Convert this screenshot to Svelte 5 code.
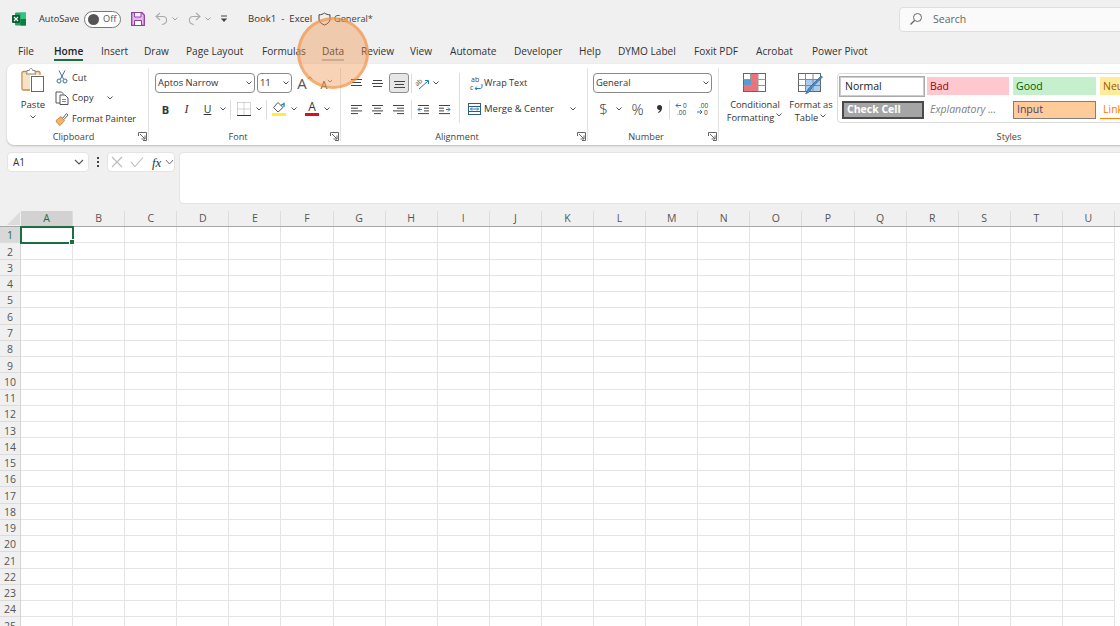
<script lang="ts">
  // width of each tab slot, from the start of one label to the start of the next
  const tabs = [
    { label: "File", w: 36 },
    { label: "Home", w: 47 },
    { label: "Insert", w: 43 },
    { label: "Draw", w: 42 },
    { label: "Page Layout", w: 76 },
    { label: "Formulas", w: 60 },
    { label: "Data", w: 39 },
    { label: "Review", w: 49 },
    { label: "View", w: 40 },
    { label: "Automate", w: 64 },
    { label: "Developer", w: 65 },
    { label: "Help", w: 39 },
    { label: "DYMO Label", w: 76 },
    { label: "Foxit PDF", w: 62 },
    { label: "Acrobat", w: 56 },
    { label: "Power Pivot", w: 100 }
  ];
  const columns = "ABCDEFGHIJKLMNOPQRSTU".split("");
  const rows = Array.from({ length: 25 }, (_, i) => i + 1);
</script>

{#snippet chev(cls = "")}
  <svg class="chev {cls}" width="8" height="6" viewBox="0 0 8 6"><path d="M1.500 1.500 4 4 6.500 1.500" fill="none" stroke="#555" stroke-width="1" /></svg>
{/snippet}

{#snippet launcher()}
  <svg class="launcher" width="9" height="9" viewBox="0 0 9 9"><path d="M.5 4V.5H8.500V8.500H5M2 2 7 7M7 3.500V7H3.500" fill="none" stroke="#666" /></svg>
{/snippet}

{#snippet lines(kind: string)}
  <svg width="13" height="11" viewBox="0 0 13 11">
    {#if kind === "left"}
      <path d="M1 1.500H12M1 4.200H8M1 6.900H12M1 9.600H8" stroke="#444" fill="none" />
    {:else if kind === "center"}
      <path d="M1 1.500H12M3 4.200H10M1 6.900H12M3 9.600H10" stroke="#444" fill="none" />
    {:else if kind === "right"}
      <path d="M1 1.500H12M5 4.200H12M1 6.900H12M5 9.600H12" stroke="#444" fill="none" />
    {:else if kind === "top"}
      <path d="M1 1.500H12M2 4.500H11M1 7.500H12" stroke="#444" fill="none" />
    {:else if kind === "middle"}
      <path d="M2 2.500H11M1 5.500H12M2 8.500H11" stroke="#444" fill="none" />
    {:else if kind === "bottom"}
      <path d="M1 3.500H12M2 6.500H11M1 9.500H12" stroke="#444" fill="none" />
    {:else if kind === "outdent"}
      <path d="M1 1.500H12M7 4.200H12M7 6.900H12M1 9.600H12" stroke="#444" fill="none" /><path d="M5 5.500H1M3 3.500 1 5.500 3 7.500" stroke="#1f7fc4" fill="none" />
    {:else}
      <path d="M1 1.500H12M1 4.200H6M1 6.900H6M1 9.600H12" stroke="#444" fill="none" /><path d="M8 5.500H12M10 3.500 12 5.500 10 7.500" stroke="#1f7fc4" fill="none" />
    {/if}
  </svg>
{/snippet}

<div class="app">
  <header class="titlebar">
    <svg class="logo" width="14" height="14" viewBox="0 0 14 14">
      <rect x="3" y="0.500" width="11" height="13" rx="1" fill="#21a366" />
      <rect x="8.500" y="0.500" width="5.500" height="6.500" fill="#33c481" />
      <rect x="8.500" y="7" width="5.500" height="6.500" fill="#107c41" />
      <rect x="0" y="3" width="8" height="8" rx="1" fill="#0b5c31" />
      <path d="M2 5 6 9M6 5 2 9" stroke="#fff" stroke-width="1.200" />
    </svg>
    <span class="autosave">AutoSave</span>
    <span class="toggle"><i></i><b>Off</b></span>
    <svg class="save" width="14" height="14" viewBox="0 0 14 14">
      <path d="M.7.7H11L13.300 3V13.300H.7Z" fill="#e3bdea" stroke="#8f3fa5" stroke-width="1.300" />
      <path d="M3.500 1V5H10V1M3.500 13V8.500H10.500V13" fill="#fff" stroke="#8f3fa5" />
    </svg>
    <svg class="undo" width="13" height="14" viewBox="0 0 13 14"><path d="M5 1 1 4.500 5 8M1.500 4.500H8C13 4.500 13 12 7 12.500" fill="none" stroke="#aaa" stroke-width="1.100" /></svg>
    <span class="dim">{@render chev()}</span>
    <svg class="redo" width="13" height="14" viewBox="0 0 13 14"><path d="M8 1 12 4.500 8 8M11.500 4.500H5C0 4.500 0 12 6 12.500" fill="none" stroke="#aaa" stroke-width="1.100" /></svg>
    <span class="dim">{@render chev()}</span>
    <svg class="customize" width="8" height="8" viewBox="0 0 8 8"><path d="M1 1H7" stroke="#444" /><path d="M.8 3.500H7.200L4 7Z" fill="#444" /></svg>
    <span class="doc">Book1&nbsp; -&nbsp; Excel</span>
    <svg class="shield" width="13" height="14" viewBox="0 0 13 14"><path d="M6.500 1C8 2.200 10 2.800 12 2.800V7C12 10 9.500 12 6.500 13 3.500 12 1 10 1 7V2.800C3 2.800 5 2.200 6.500 1Z" fill="none" stroke="#444" /></svg>
    <span class="sens">General*</span>
    <div class="search">
      <svg width="14" height="14" viewBox="0 0 14 14"><circle cx="8.500" cy="5.500" r="4" fill="none" stroke="#666" /><path d="M5.500 8.500 1.500 12.500" stroke="#666" stroke-width="1.200" /></svg>
      <span>Search</span>
    </div>
  </header>

  <nav class="tabs">
    {#each tabs as tab}
      <span class="tab" style="width: {tab.w}px">
        <span class="tab-label" class:active={tab.label === "Home"} class:hover={tab.label === "Data"}>{tab.label}</span>
      </span>
    {/each}
  </nav>

  <section class="ribbon">
    <div class="group clipboard">
      <div class="body clip-body">
        <div class="paste">
          <svg width="26" height="26" viewBox="0 0 26 26">
            <path d="M3 4.500H19V8H10V23H3Z" fill="#f5e3c8" />
            <path d="M10 23H3.500C2.600 23 2 22.400 2 21.500V6C2 5 2.600 4.500 3.500 4.500H18.500C19.400 4.500 20 5 20 6V8" fill="none" stroke="#c98a3c" stroke-width="1.300" />
            <path d="M7 5.500V3.500H9.300C9.700 .7 12.300 .7 12.700 3.500H15V5.500L16 7H6Z" fill="#fff" stroke="#888" />
            <rect x="11.500" y="9.500" width="12" height="15" fill="#fff" stroke="#666" />
          </svg>
          <span>Paste</span>
          {@render chev()}
        </div>
        <div class="clip-col">
          <div class="clip-row">
            <i class="clip-icon"><svg width="12" height="14" viewBox="0 0 12 14"><path d="M3 .5 7.500 9M9 .5 4.500 9" stroke="#3f6f96" fill="none" /><circle cx="3" cy="11" r="2" fill="#fff" stroke="#3f6f96" /><circle cx="9" cy="11" r="2" fill="#fff" stroke="#3f6f96" /></svg></i>
            <span>Cut</span>
          </div>
          <div class="clip-row">
            <i class="clip-icon"><svg width="14" height="14" viewBox="0 0 14 14"><path d="M5 12H1V1H6.500L8 2.500V3.500" fill="none" stroke="#555" /><path d="M5 4H10L13 7V13.500H5Z" fill="#fff" stroke="#555" /><path d="M7 8.500H11M7 10.500H11" stroke="#888" /></svg></i>
            <span>Copy</span>
            <span class="copy-chev">{@render chev()}</span>
          </div>
          <div class="clip-row">
            <i class="clip-icon"><svg width="14" height="14" viewBox="0 0 14 14"><path d="M1 8.500 6 4.500 9.500 8.500 5 13.500C3.500 12.500 2 11 1 8.500Z" fill="#f2b36b" stroke="#c9731e" stroke-width=".8" /><path d="M7.500 6.500 11.500 1.500 13 3 9 7.500" fill="#fff" stroke="#555" stroke-width=".9" /></svg></i>
            <span>Format Painter</span>
          </div>
        </div>
      </div>
      <footer><span>Clipboard</span>{@render launcher()}</footer>
    </div>

    <div class="group font">
      <div class="body">
        <div class="row">
          <div class="select font-name"><span>Aptos Narrow</span>{@render chev()}</div>
          <div class="select font-size"><span>11</span>{@render chev()}</div>
          <span class="grow-a">A<svg width="6" height="4" viewBox="0 0 6 4"><path d="M.8 3 3 1 5.200 3" fill="none" stroke="#666" stroke-width=".8" /></svg></span>
          <span class="shrink-a">A<svg width="6" height="4" viewBox="0 0 6 4"><path d="M.8 1 3 3 5.200 1" fill="none" stroke="#666" stroke-width=".8" /></svg></span>
        </div>
        <div class="row">
          <span class="tool bold">B</span>
          <span class="tool italic">I</span>
          <span class="tool under">U</span>
          <span class="chevbox">{@render chev()}</span>
          <i class="vsep font-sep"></i>
          <span class="tool">
            <svg width="14" height="14" viewBox="0 0 14 14"><path d="M.5.5H13.500V13.500M.5.500V13.500M7 .5V13M.5 7H13.500" fill="none" stroke="#aaa" stroke-dasharray="1 1" /><path d="M0 13.500H14" stroke="#333" /></svg>
          </span>
          <span class="chevbox">{@render chev()}</span>
          <i class="vsep"></i>
          <span class="tool">
            <svg width="14" height="14" viewBox="0 0 14 14"><path d="M6 .5 11 5.500 6 10 1.500 5.500Z" fill="#fff" stroke="#555" /><path d="M9 3.500 12 1.500V5" fill="none" stroke="#1f7fc4" stroke-width="1.300" /><rect y="11" width="14" height="3" fill="#ffee33" /></svg>
          </span>
          <span class="chevbox">{@render chev()}</span>
          <span class="tool color-a"><b>A</b><i></i></span>
          <span class="chevbox">{@render chev()}</span>
        </div>
      </div>
      <footer><span>Font</span>{@render launcher()}</footer>
    </div>

    <div class="group alignment">
      <div class="body">
        <div class="row">
          <span class="tool">{@render lines("top")}</span>
          <span class="tool">{@render lines("middle")}</span>
          <span class="tool selected">{@render lines("bottom")}</span>
          <i class="vsep"></i>
          <span class="tool orient">
            <svg width="15" height="13" viewBox="0 0 15 13"><text x="1.500" y="8" font-size="6.500" transform="rotate(-40 4 8)" fill="#555" font-family="'Open Sans', sans-serif">ab</text><path d="M4 12 13 4M10 3.500H13.500V7" fill="none" stroke="#1f7fc4" /></svg>
          </span>
          <span class="chevbox">{@render chev()}</span>
          <i class="vsep big-gap"></i>
          <span class="labelled wrap">
            <svg width="13" height="14" viewBox="0 0 13 14"><text x="1" y="6" font-size="7" fill="#444" font-family="'Open Sans', sans-serif">ab</text><text x="0" y="13.500" font-size="7" fill="#444" font-family="'Open Sans', sans-serif">c</text><path d="M12 8V10.500C12 12 11 12.500 10 12.500H5M7 10.500 5 12.500 7 14" fill="none" stroke="#1f7fc4" /></svg>
            <span>Wrap Text</span>
          </span>
        </div>
        <div class="row">
          <span class="tool">{@render lines("left")}</span>
          <span class="tool">{@render lines("center")}</span>
          <span class="tool">{@render lines("right")}</span>
          <i class="vsep"></i>
          <span class="tool">{@render lines("outdent")}</span>
          <span class="tool">{@render lines("indent")}</span>
          <span class="labelled merge">
            <svg width="13" height="12" viewBox="0 0 13 12"><rect x=".5" y=".5" width="12" height="11" fill="#fff" stroke="#2d5f82" /><path d="M0 3.500H13M0 8.500H13" stroke="#2d5f82" /><path d="M2.500 6H10.500M4 4.500 2.500 6 4 7.500M9 4.500 10.500 6 9 7.500" fill="none" stroke="#1f7fc4" /></svg>
            <span>Merge &amp; Center</span>
            <span class="merge-chev">{@render chev()}</span>
          </span>
        </div>
      </div>
      <footer><span>Alignment</span>{@render launcher()}</footer>
    </div>

    <div class="group number">
      <div class="body">
        <div class="row">
          <div class="select number-format"><span>General</span>{@render chev()}</div>
        </div>
        <div class="row">
          <span class="tool dollar">$</span>
          <span class="chevbox">{@render chev()}</span>
          <span class="tool percent">%</span>
          <span class="tool comma">
            <svg width="7" height="10" viewBox="0 0 7 10"><path d="M3.500 1C5.500 1 6.300 2.500 6 4.500 5.700 6.500 4.500 8 2.500 9L2 8.300C3 7.500 3.700 6.800 3.900 6 2.300 6.200 1 5.200 1 3.500 1 2 2 1 3.500 1Z" fill="#333" /></svg>
          </span>
          <i class="vsep"></i>
          <span class="tool">
            <svg width="14" height="14" viewBox="0 0 14 14"><path d="M6 3.500H1M3 1.500 1 3.500 3 5.500" fill="none" stroke="#1f7fc4" /><text x="8" y="5.500" font-size="6.500" fill="#444" font-family="'Open Sans', sans-serif">0</text><text x="2" y="13" font-size="6.500" fill="#444" font-family="'Open Sans', sans-serif">.00</text></svg>
          </span>
          <span class="tool">
            <svg width="14" height="14" viewBox="0 0 14 14"><text x="3" y="5.500" font-size="6.500" fill="#444" font-family="'Open Sans', sans-serif">.00</text><path d="M1 10H6M4 8 6 10 4 12" fill="none" stroke="#1f7fc4" /><text x="8" y="13" font-size="6.500" fill="#444" font-family="'Open Sans', sans-serif">0</text></svg>
          </span>
        </div>
      </div>
      <footer><span>Number</span>{@render launcher()}</footer>
    </div>

    <div class="group styles">
      <div class="body style-body">
        <div class="big">
          <svg width="24" height="20" viewBox="0 0 24 20">
            <rect x=".5" y=".5" width="22" height="18" fill="#fff" stroke="#666" />
            <path d="M.5 6.500H22.500M.5 12.500H22.500M7.500 .5V18.500M15 .5V18.500" stroke="#999" />
            <rect x="8" y="1" width="7" height="5" fill="#e8747c" /><rect x="1" y="7" width="7" height="5" fill="#5b9bd5" /><rect x="8" y="7" width="7" height="5" fill="#e8747c" /><rect x="1" y="13" width="14" height="5" fill="#e8747c" />
          </svg>
          <span>Conditional</span>
          <span>Formatting {@render chev()}</span>
        </div>
        <div class="big table-fmt">
          <svg width="26" height="22" viewBox="0 0 26 22">
            <rect x=".5" y=".5" width="22" height="18" fill="#fff" stroke="#666" />
            <rect x="8" y="7" width="14" height="11" fill="#a8cdf0" />
            <path d="M.5 6.500H22.500M.5 12.500H22.500M7.500 .5V18.500M15 .5V18.500" stroke="#888" />
            <path d="M24.500 4 14 14.500 12 18C10.500 20 8.500 20.500 7.500 20.500 9.500 19 9.500 16 11.500 14.500L23 3Z" fill="#4a90d9" stroke="#2d5f82" stroke-width=".7" />
          </svg>
          <span>Format as</span>
          <span>Table {@render chev()}</span>
        </div>
        <div class="gallery">
          <span class="cell normal">Normal</span>
          <span class="cell bad">Bad</span>
          <span class="cell good">Good</span>
          <span class="cell neutral">Neutral</span>
          <span class="cell check">Check Cell</span>
          <span class="cell explain">Explanatory ...</span>
          <span class="cell input">Input</span>
          <span class="cell link">Linked Cell</span>
        </div>
      </div>
      <footer class="style-foot"><span>Styles</span></footer>
    </div>
  </section>

  <section class="formula">
    <div class="namebox"><span>A1</span><svg width="10" height="6" viewBox="0 0 10 6"><path d="M1 1 5 5 9 1" fill="none" stroke="#555" stroke-width="1.100" /></svg></div>
    <span class="dots"><i></i><i></i><i></i></span>
    <div class="fxbox">
      <svg width="12" height="12" viewBox="0 0 12 12"><path d="M1 1 11 11M11 1 1 11" stroke="#bbb" stroke-width="1.100" /></svg>
      <svg width="14" height="12" viewBox="0 0 14 12"><path d="M1 6 5 10.500 13 1.500" fill="none" stroke="#bbb" stroke-width="1.100" /></svg>
      <em>fx</em>
      <svg width="9" height="6" viewBox="0 0 9 6"><path d="M1 1 4.500 5 8 1" fill="none" stroke="#777" /></svg>
    </div>
    <div class="input-line"></div>
  </section>

  <section class="sheet">
    <div class="head-row">
      <div class="corner"><svg width="13" height="13" viewBox="0 0 13 13"><path d="M13 0V13H0Z" fill="#dcdcdc" /></svg></div>
      {#each columns as col}
        <div class="col-head" class:on={col === "A"}>{col}</div>
      {/each}
    </div>
    {#each rows as r}
      <div class="data-row">
        <div class="row-head" class:on={r === 1}>{r}</div>
        {#each columns as col}
          <div class="data-cell"></div>
        {/each}
      </div>
    {/each}
    <div class="active-cell"><i></i></div>
  </section>

  <div class="spotlight"></div>
</div>

<style>
  :global(body) {
    margin: 0;
  }

  .app {
    position: relative;
    width: 1120px;
    height: 626px;
    overflow: hidden;
    background: #f0f0f0;
    color: #333;
    font-family: "Open Sans", "Noto Sans", sans-serif;
    font-size: 10px;
    line-height: 1;
  }

  svg {
    display: block;
    flex: none;
  }

  /* ── title bar ─────────────────────────────────────── */
  .titlebar {
    display: flex;
    align-items: center;
    height: 38px;
    padding-left: 12px;
    font-size: 9.2px;
  }

  .logo {
    margin-right: 13px;
  }

  .autosave {
    flex: none;
    width: 45px;
    color: #333;
  }

  .toggle {
    display: flex;
    flex: none;
    align-items: center;
    box-sizing: border-box;
    width: 37px;
    height: 17px;
    padding-left: 3px;
    border: 1px solid #777;
    border-radius: 9px;
    background: #fff;
    margin-right: 10px;
  }

  .toggle i {
    width: 11px;
    height: 11px;
    border-radius: 50%;
    background: #555;
  }

  .toggle b {
    margin-left: 4px;
    font-weight: 400;
    color: #555;
  }

  .save {
    margin-right: 10px;
  }

  .undo {
    margin-right: 3px;
  }

  .dim {
    opacity: 0.5;
    margin-right: 9px;
  }

  .redo {
    margin-right: 3px;
  }

  .customize {
    margin: 0 20px 0 -1px;
  }

  .doc {
    flex: none;
    width: 70px;
    white-space: nowrap;
    font-size: 9.6px;
  }

  .shield {
    margin-right: 3px;
  }

  .sens {
    flex: none;
    color: #444;
    width: 565px;
  }

  .search {
    display: flex;
    align-items: center;
    gap: 10px;
    flex: none;
    box-sizing: border-box;
    width: 240px;
    height: 25px;
    padding-left: 9px;
    border: 1px solid #dedede;
    border-radius: 4px;
    background: #fafafa;
    color: #666;
    font-size: 10.5px;
  }

  /* ── tabs ──────────────────────────────────────────── */
  .tabs {
    display: flex;
    height: 26px;
    padding-left: 18px;
    box-sizing: border-box;
  }

  .tab {
    flex: none;
    height: 26px;
    line-height: 26px;
    color: #333;
    font-size: 10.1px;
    white-space: nowrap;
  }

  .tab-label {
    position: relative;
    display: inline-block;
  }

  .tab-label.active {
    font-weight: 600;
    color: #222;
  }

  .tab-label.active::after,
  .tab-label.hover::after {
    content: "";
    position: absolute;
    left: 0;
    right: 0;
    bottom: 3px;
    height: 2px;
    background: #1e6c41;
  }

  .tab-label.hover::after {
    background: #bbb;
  }

  /* ── ribbon ────────────────────────────────────────── */
  .ribbon {
    display: flex;
    box-sizing: border-box;
    width: 1200px;
    height: 81px;
    margin-left: 7px;
    background: #fff;
    border-radius: 7px;
    box-shadow: 0 1px 2px rgba(0, 0, 0, 0.22);
  }

  .group {
    position: relative;
    flex: none;
    display: flex;
    flex-direction: column;
    box-sizing: border-box;
    height: 81px;
  }

  .group::after {
    content: "";
    position: absolute;
    right: 0;
    top: 4px;
    bottom: 4px;
    width: 1px;
    background: #e2e2e2;
  }

  .clipboard {
    width: 142px;
  }

  .font {
    width: 192px;
    padding-left: 6px;
  }

  .alignment {
    width: 247px;
    padding-left: 5px;
  }

  .number {
    width: 131px;
    padding-left: 5px;
  }

  .styles {
    width: 600px;
  }

  .styles::after {
    display: none;
  }

  .body {
    display: flex;
    flex-direction: column;
    gap: 6px;
    height: 65px;
    padding-top: 9px;
    box-sizing: border-box;
  }

  .row {
    display: flex;
    align-items: center;
    height: 20px;
  }

  footer {
    display: flex;
    justify-content: center;
    align-items: center;
    position: relative;
    box-sizing: border-box;
    height: 14px;
    padding-top: 2px;
    padding-right: 20px;
    font-size: 9.2px;
    color: #444;
  }

  .launcher {
    position: absolute;
    right: 2px;
    top: 3px;
  }

  .clip-body {
    flex-direction: row;
    gap: 0;
    padding-top: 3px;
  }

  .clipboard footer {
    padding-right: 9px;
  }

  .paste {
    display: flex;
    flex: none;
    flex-direction: column;
    align-items: center;
    width: 52px;
    margin-right: -4px;
    box-sizing: border-box;
  }

  .paste svg:first-child {
    margin-bottom: 7px;
  }

  .paste span {
    font-size: 9.6px;
    margin-bottom: 4px;
  }

  .clip-col {
    display: flex;
    flex-direction: column;
  }

  .clip-row {
    display: flex;
    align-items: center;
    height: 21px;
    white-space: nowrap;
    font-size: 9.2px;
  }

  .clip-icon {
    display: flex;
    justify-content: center;
    flex: none;
    width: 14px;
    margin-right: 3px;
  }

  .copy-chev {
    margin-left: 12px;
  }

  .select {
    display: flex;
    flex: none;
    align-items: center;
    justify-content: space-between;
    box-sizing: border-box;
    height: 20px;
    padding: 0 1px 0 2px;
    border: 1px solid #8a8a8a;
    border-radius: 4px;
    background: #fff;
    font-size: 9.4px;
  }

  .font-name {
    width: 100px;
    margin-right: 2px;
  }

  .font-size {
    width: 35px;
    margin-right: 2px;
  }

  .grow-a,
  .shrink-a {
    display: flex;
    flex: none;
    width: 22px;
    justify-content: center;
    color: #555;
    font-size: 15px;
  }

  .shrink-a {
    font-size: 11px;
    padding-top: 2px;
    box-sizing: border-box;
  }

  .tool {
    display: flex;
    align-items: center;
    justify-content: center;
    flex: none;
    box-sizing: border-box;
    width: 21px;
    height: 20px;
    color: #333;
  }

  .bold {
    font-weight: 700;
    font-size: 11px;
  }

  .italic {
    font-family: "Liberation Serif", serif;
    font-style: italic;
    font-size: 12px;
  }

  .under {
    text-decoration: underline;
    font-size: 10.5px;
  }

  .chevbox {
    display: flex;
    justify-content: center;
    flex: none;
    width: 10px;
  }

  .vsep {
    flex: none;
    width: 1px;
    height: 19px;
    margin: 0 1px 0 2px;
    background: #dcdcdc;
  }

  .font-sep {
    margin-right: 2px;
  }

  .color-a {
    position: relative;
    margin-left: 3px;
    width: 20px;
  }

  .color-a b {
    font-weight: 400;
    font-size: 12px;
    margin-top: -4px;
  }

  .color-a i {
    position: absolute;
    left: 3px;
    right: 3px;
    bottom: 3px;
    height: 3px;
    background: #d2121d;
  }

  .selected {
    height: 20px;
    width: 20px;
    margin-left: 1px;
    border: 1px solid #8f8f8f;
    border-radius: 3px;
    background: #e6e6e6;
  }

  .orient {
    width: 18px;
  }

  .big-gap {
    align-self: flex-start;
    height: 50px;
    margin: 0 10px 0 18px;
  }

  .labelled {
    display: flex;
    align-items: center;
    gap: 3px;
    font-size: 9.5px;
    white-space: nowrap;
  }

  .wrap {
    gap: 1px;
    font-size: 9.1px;
  }

  .merge {
    margin-left: 13px;
  }

  .merge-chev {
    margin-left: 12px;
  }

  .number-format {
    width: 119px;
  }

  .dollar {
    font-size: 15px;
    font-weight: 300;
  }

  .percent {
    font-size: 15px;
    font-weight: 300;
    width: 27px;
  }

  .comma {
    width: 16px;
  }

  .style-body {
    flex-direction: row;
    gap: 0;
    padding-top: 9px;
  }

  .big {
    display: flex;
    flex: none;
    flex-direction: column;
    align-items: center;
    width: 72px;
    font-size: 9.3px;
    line-height: 13px;
  }

  .big svg:first-child {
    margin-bottom: 5px;
  }

  .big span {
    display: flex;
    align-items: center;
    gap: 1px;
    white-space: nowrap;
  }

  .table-fmt {
    width: 40px;
    margin-right: 6px;
  }

  .table-fmt svg:first-child {
    margin-bottom: 3px;
  }

  .gallery {
    display: grid;
    flex: none;
    grid-template-columns: 87px 86px 87px 87px;
    grid-template-rows: 24px 23px;
    align-items: center;
    box-sizing: border-box;
    width: 300px;
    height: 50px;
    padding: 0 1px;
    border: 1px solid #dcdcdc;
    border-radius: 4px 0 0 4px;
    background: #fff;
  }

  .cell {
    display: flex;
    align-items: center;
    box-sizing: border-box;
    height: 18px;
    margin: 0 3px 0 1px;
    padding-left: 3px;
    font-size: 10.5px;
    white-space: nowrap;
    overflow: hidden;
  }

  .normal {
    height: 21px;
    margin: 0 1px 0 0;
    padding-left: 5px;
    border: 1px solid #aaa;
    outline: 1px solid #ccc;
    outline-offset: -2px;
    color: #222;
  }

  .bad {
    background: #ffc7ce;
    color: #9c0006;
  }

  .good {
    background: #c6efce;
    color: #006100;
  }

  .neutral {
    background: #ffeb9c;
    color: #9c5700;
  }

  .check {
    margin: 0 2px 0 3px;
    background: #a5a5a5;
    border: 2px solid #4a4a4a;
    color: #fff;
    font-weight: 700;
    font-size: 10.5px;
  }

  .explain {
    color: #7f7f7f;
    font-style: italic;
  }

  .input {
    background: #ffcc99;
    border: 1px solid #7f7f7f;
    color: #3f3f76;
  }

  .link {
    color: #fa7d00;
    border-bottom: 1px solid #ff8001;
  }

  .style-foot {
    padding-right: 0;
    width: 580px;
  }

  /* ── formula bar ───────────────────────────────────── */
  .formula {
    display: flex;
    align-items: flex-start;
    box-sizing: border-box;
    height: 66px;
    padding: 7px 0 0 7px;
  }

  .namebox {
    display: flex;
    flex: none;
    align-items: center;
    justify-content: space-between;
    box-sizing: border-box;
    width: 82px;
    height: 20px;
    padding: 0 4px 0 5px;
    border-radius: 4px;
    background: #fff;
    border: 1px solid #e4e4e4;
    font-size: 10px;
  }

  .dots {
    display: flex;
    flex: none;
    flex-direction: column;
    align-items: center;
    gap: 2px;
    width: 18px;
    padding-top: 5px;
  }

  .dots i {
    width: 2px;
    height: 2px;
    background: #444;
  }

  .fxbox {
    display: flex;
    flex: none;
    align-items: center;
    gap: 7px;
    box-sizing: border-box;
    width: 68px;
    height: 20px;
    padding-left: 3px;
    border: 1px solid #e4e4e4;
    border-radius: 4px;
    background: #fff;
  }

  .fxbox em {
    font-family: "Liberation Serif", serif;
    font-size: 13px;
    color: #333;
    margin-left: 1px;
    margin-right: -3px;
  }

  .input-line {
    flex: none;
    box-sizing: border-box;
    width: 960px;
    height: 52px;
    margin-left: 4px;
    border: 1px solid #e4e4e4;
    border-radius: 4px;
    background: #fff;
  }

  /* ── sheet ─────────────────────────────────────────── */
  .sheet {
    position: relative;
    background: #fff;
  }

  .head-row,
  .data-row {
    display: grid;
    grid-template-columns: 21px repeat(21, 52.1px);
    width: 1200px;
  }

  .head-row {
    box-sizing: border-box;
    height: 16px;
    background: #f0f0f0;
    border-bottom: 1px solid #a8a8a8;
  }

  .corner {
    display: flex;
    justify-content: flex-end;
    align-items: flex-end;
    padding: 0 1px 1px 0;
    box-sizing: border-box;
  }

  .col-head {
    display: flex;
    align-items: center;
    justify-content: center;
    box-sizing: border-box;
    border-right: 1px solid #dcdcdc;
    color: #555;
    font-size: 10.5px;
  }

  .col-head.on {
    background: #d2d2d2;
    color: #1e6c41;
  }

  .data-row {
    height: 16.27px;
  }

  .row-head {
    display: flex;
    align-items: center;
    justify-content: center;
    box-sizing: border-box;
    padding-top: 2px;
    border-right: 1px solid #d4d4d4;
    border-bottom: 1px solid #dcdcdc;
    background: #f0f0f0;
    color: #555;
    font-size: 10.5px;
  }

  .row-head.on {
    background: #d8d8d8;
    color: #1e6c41;
  }

  .data-cell {
    box-sizing: border-box;
    border-right: 1px solid #e4e4e4;
    border-bottom: 1px solid #e4e4e4;
  }

  .active-cell {
    position: absolute;
    left: 20px;
    top: 15px;
    box-sizing: border-box;
    width: 54px;
    height: 18px;
    border: 2px solid #1e6c41;
  }

  .active-cell i {
    position: absolute;
    right: -3px;
    bottom: -3px;
    width: 4px;
    height: 4px;
    background: #1e6c41;
    border: 1px solid #fff;
  }

  .spotlight {
    position: absolute;
    left: 297px;
    top: 17px;
    box-sizing: border-box;
    width: 72px;
    height: 72px;
    border-radius: 50%;
    background: rgba(240, 140, 60, 0.38);
    border: 3px solid rgba(240, 140, 60, 0.55);
  }
</style>
